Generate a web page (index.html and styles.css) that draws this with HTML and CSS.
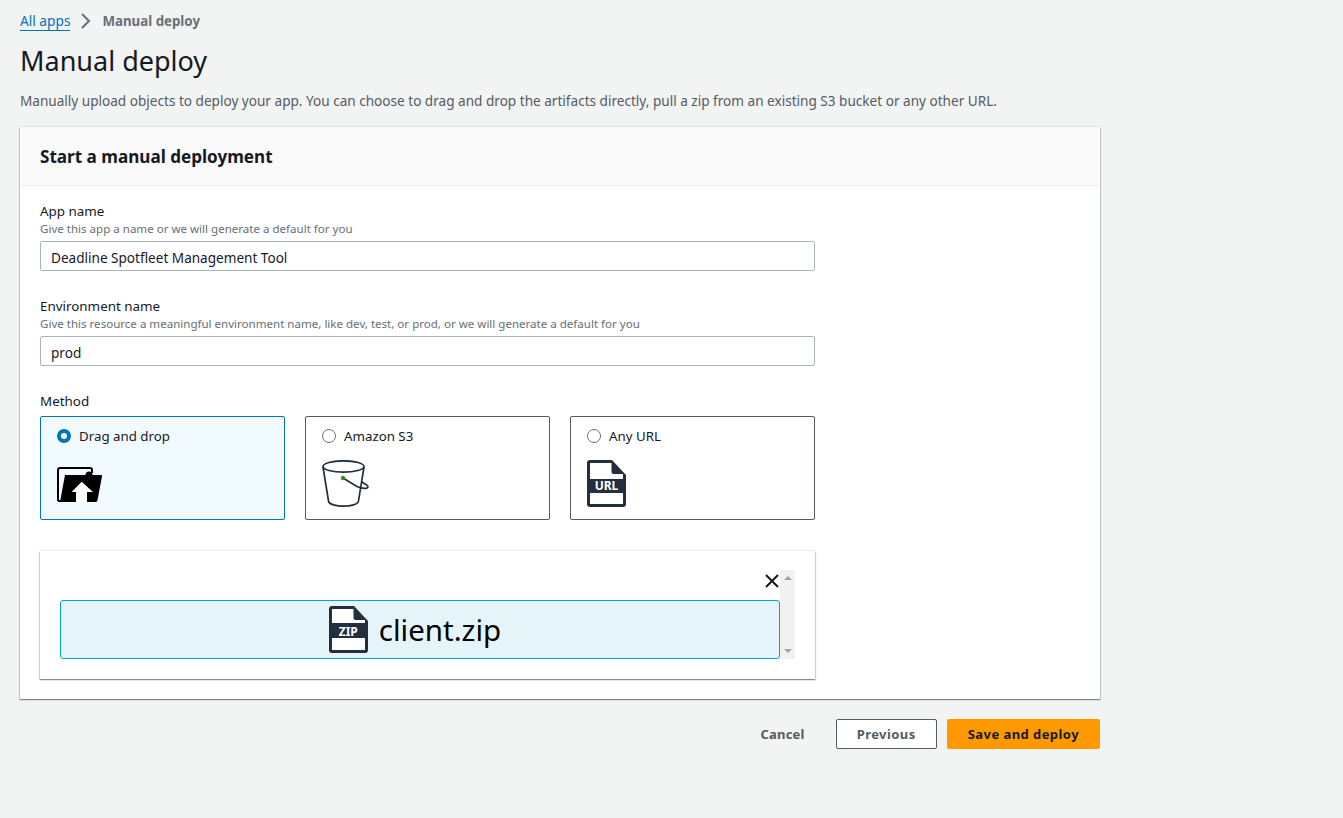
FILE: index.html
```html
<!DOCTYPE html>
<html lang="en">
<head>
<meta charset="utf-8">
<title>Manual deploy</title>
<link rel="stylesheet" href="styles.css">
</head>
<body>
<main class="page">
  <nav class="crumbs">
    <a class="crumb-link" href="#">All apps</a>
    <svg class="crumb-sep" width="12" height="16" viewBox="0 0 12 16"><path d="M2 1 9 8 2 15" fill="none" stroke="#687078" stroke-width="2"/></svg>
    <span class="crumb-current">Manual deploy</span>
  </nav>
  <h1 class="title">Manual deploy</h1>
  <p class="lead">Manually upload objects to deploy your app. You can choose to drag and drop the artifacts directly, pull a zip from an existing S3 bucket or any other URL.</p>

  <section class="card">
    <header class="card-head"><h2>Start a manual deployment</h2></header>
    <div class="card-body">
      <div class="field">
        <label class="label">App name</label>
        <div class="hint">Give this app a name or we will generate a default for you</div>
        <input class="input" type="text" value="Deadline Spotfleet Management Tool">
      </div>
      <div class="field">
        <label class="label">Environment name</label>
        <div class="hint">Give this resource a meaningful environment name, like dev, test, or prod, or we will generate a default for you</div>
        <input class="input" type="text" value="prod">
      </div>
      <div class="method">
        <div class="label method-label">Method</div>
        <div class="tiles">
          <div class="tile tile-on">
            <div class="tile-row"><span class="radio radio-on"></span><span>Drag and drop</span></div>
            <svg class="tile-icon tile-icon-folder" width="45" height="35" viewBox="0 0 45 35">
              <path d="M1 34V3a2 2 0 0 1 2-2h30a2 2 0 0 1 2 2v3M1 34h6" fill="none" stroke="#000" stroke-width="2"/>
              <path d="M8 8H28.500a3.500 3.500 0 0 1 7 0H44a1 1 0 0 1 1 1.500L40.500 33a2 2 0 0 1-2 2H3z" fill="#000"/>
              <path d="M24.700 14.700 36 25h-6v10H19V25h-4.300z" fill="#fff"/>
            </svg>
          </div>
          <div class="tile">
            <div class="tile-row"><span class="radio"></span><span>Amazon S3</span></div>
            <svg class="tile-icon" width="48" height="48" viewBox="0 0 48 48">
              <ellipse cx="21.500" cy="6.500" rx="20.500" ry="5.700" fill="none" stroke="#232f3e" stroke-width="1.700"/>
              <path d="M1 7l5.500 34c.5 3.500 8 5.200 15 5.200S36 44.500 36.500 41L42 7" fill="none" stroke="#232f3e" stroke-width="1.700"/>
              <path d="M21 18 35 26.500c3 1.500 6 2 9 1.800 2.500-.2 2.500-2.300.5-3.300L40 22" fill="none" stroke="#232f3e" stroke-width="1.700"/>
              <circle cx="21" cy="18" r="2.200" fill="#3f8624"/>
            </svg>
          </div>
          <div class="tile">
            <div class="tile-row"><span class="radio"></span><span>Any URL</span></div>
            <div class="file-icon file-icon-url">
              <svg width="39" height="47" viewBox="0 0 39 47">
                <path d="M3 0h22l14 15v29a3 3 0 0 1-3 3H3a3 3 0 0 1-3-3V3a3 3 0 0 1 3-3z" fill="#232f3e"/>
                <path d="M3 3h21.500v9a2 2 0 0 0 2 2H36v5H3zM3 33h33v11H3z" fill="#fff"/>
              </svg>
              <span class="file-tag">URL</span>
            </div>
          </div>
        </div>
      </div>
      <div class="drop">
        <div class="drop-inner">
          <div class="drop-list">
            <div class="drop-close">
              <svg width="16" height="16" viewBox="0 0 16 16"><path d="M2 2 14 14M14 2 2 14" stroke="#16191f" stroke-width="2" fill="none"/></svg>
            </div>
            <div class="zip">
              <div class="file-icon file-icon-zip">
                <svg width="39" height="47" viewBox="0 0 39 47">
                  <path d="M3 0h22l14 15v29a3 3 0 0 1-3 3H3a3 3 0 0 1-3-3V3a3 3 0 0 1 3-3z" fill="#232f3e"/>
                  <path d="M3 3h21.500v9a2 2 0 0 0 2 2H36v3H3zM3 32h33v12H3z" fill="#fff"/>
                </svg>
                <span class="file-tag">ZIP</span>
              </div>
              <span class="zip-name">client.zip</span>
            </div>
          </div>
          <div class="scroll">
            <span class="arrow arrow-up"></span>
            <span class="arrow arrow-down"></span>
          </div>
        </div>
      </div>
    </div>
  </section>

  <footer class="actions">
    <button class="btn btn-link" type="button">Cancel</button>
    <button class="btn btn-normal" type="button">Previous</button>
    <button class="btn btn-primary" type="button">Save and deploy</button>
  </footer>
</main>
</body>
</html>
```

FILE: styles.css
```css
* { box-sizing: border-box; }
html, body { margin: 0; padding: 0; }
body {
  background: #f2f3f3;
  color: #16191f;
  font-family: "Noto Sans", "Open Sans", sans-serif;
  font-size: 14px;
  line-height: 20px;
  min-height: 818px;
}
.page { width: 1120px; padding: 11px 20px 0; }
.crumbs { display: flex; align-items: center; height: 20px; }
.crumb-link { color: #0073bb; text-decoration: none; border-bottom: 1px solid #0073bb; font-size: 13.7px; line-height: 19px; height: 20px; }
.crumb-sep { margin: 0 10px; }
.crumb-current { color: #687078; font-weight: 700; font-size: 13.3px; }
.title { margin: 12px 0 0; font-size: 27px; line-height: 36px; font-weight: 400; }
.lead { margin: 12px 0 0; color: #545b64; font-size: 13.58px; line-height: 20px; white-space: nowrap; }
.card { margin-top: 16px; background: #fff; box-shadow: 0 1px 1px 0 rgba(0,28,36,.3), 1px 1px 1px 0 rgba(0,28,36,.15), -1px 1px 1px 0 rgba(0,28,36,.15), 0 -1px 1px 0 rgba(0,28,36,.08); }
.card-head { height: 59px; background: #fafafa; border-bottom: 1px solid #eaeded; padding: 1px 20px 0; display: flex; align-items: center; }
.card-head h2 { margin: 0; font-size: 17.1px; font-weight: 700; line-height: 22px; }
.card-body { padding: 15px 20px 20px; }
.field { width: 775px; margin-bottom: 25px; }
.label { display: block; font-size: 13.4px; line-height: 20px; }
.hint { font-size: 11.56px; line-height: 16px; color: #687078; }
.input { display: block; width: 100%; height: 30px; margin-top: 4px; padding: 2px 10px 0; border: 1px solid #aab7b8; border-radius: 2px; background: #fff; color: #16191f; font: 13.57px/20px "Noto Sans", "Open Sans", sans-serif; outline: none; }
.method { width: 775px; }
.method-label { margin-bottom: 5px; }
.tiles { display: grid; grid-template-columns: repeat(3, 245px); column-gap: 20px; }
.tile { height: 104px; border: 1px solid #545b64; border-radius: 2px; padding: 9px 16px; background: #fff; font-size: 13.3px; }
.tile-on { border-color: #0073bb; background: #f1faff; }
.tile-row { display: flex; align-items: center; gap: 8px; height: 20px; }
.radio { width: 14px; height: 14px; border-radius: 50%; border: 1px solid #687078; background: #fff; flex: none; }
.radio-on { border: 4px solid #0073bb; }
.tile-icon { display: block; margin-top: 14px; }
.tile-icon-folder { margin-top: 21px; }
.file-icon { position: relative; width: 39px; height: 47px; margin-top: 14px; }
.file-icon svg { display: block; }
.file-tag { position: absolute; left: 0; right: 0; top: 18px; color: #fff; font-size: 12px; line-height: 15px; font-weight: 700; text-align: center; }
.drop { margin-top: 31px; width: 775px; height: 128px; padding: 19px 20px 20px; background: #fff; box-shadow: 0 1px 1px 0 rgba(0,28,36,.3), 1px 1px 1px 0 rgba(0,28,36,.15), -1px 1px 1px 0 rgba(0,28,36,.15), 0 -1px 1px 0 rgba(0,28,36,.08); }
.drop-inner { display: flex; height: 89px; }
.drop-list { width: 720px; display: flex; flex-direction: column; }
.drop-close { height: 30px; display: flex; justify-content: flex-end; align-items: center; padding: 0 0 8px; }
.zip { height: 59px; background: #e5f4f9; border: 1px solid #00a8cf; border-radius: 3px; padding-right: 10px; display: flex; justify-content: center; align-items: center; gap: 11px; }
.zip-name { font-size: 29.5px; line-height: 36px; color: #000; padding-top: 1px; }
.file-icon-zip { margin-top: 0; }
.scroll { width: 15px; background: #f1f1f1; position: relative; }
.arrow { position: absolute; left: 4px; width: 0; height: 0; border-left: 4px solid transparent; border-right: 4px solid transparent; }
.arrow-up { top: 6px; border-bottom: 4px solid #a3a3a3; }
.arrow-down { bottom: 6px; border-top: 4px solid #a3a3a3; }
.actions { display: flex; justify-content: flex-end; align-items: center; gap: 10px; margin-top: 20px; }
.btn { height: 30px; border-radius: 2px; font: 700 13px/20px "Noto Sans", "Open Sans", sans-serif; letter-spacing: .44px; padding: 0 20px; border: 1px solid transparent; }
.btn-link { background: transparent; color: #545b64; letter-spacing: .2px; }
.btn-normal { background: #fff; border-color: #545b64; color: #545b64; }
.btn-primary { background: #ff9900; color: #16191f; }
```
